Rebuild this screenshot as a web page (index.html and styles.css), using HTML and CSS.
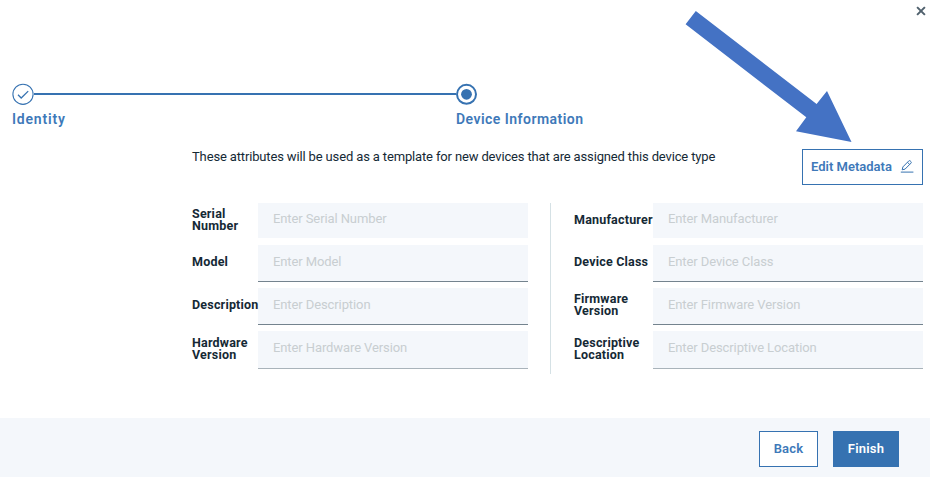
FILE: index.html
```html
<!DOCTYPE html>
<html lang="en">
<head>
<meta charset="utf-8">
<title>Device Information</title>
<link rel="stylesheet" href="styles.css">
</head>
<body>
<main class="dialog">
  <header class="top">
    <button class="close" aria-label="Close"><svg width="10" height="10" viewBox="0 0 10 10"><path d="M1.1 1.1 8.9 8.9M8.9 1.1 1.1 8.9"/></svg></button>
  </header>
  <nav class="steps">
    <div class="track">
      <svg width="22" height="22" viewBox="0 0 22 22"><circle class="ring thin" cx="11" cy="11.3" r="10.1"/><path class="tick" d="M6 11.8 9.2 15 16.2 8.1"/></svg>
      <span class="line"></span>
      <svg width="22" height="22" viewBox="0 0 22 22"><circle class="ring" cx="10.5" cy="11.3" r="9.5"/><circle class="dot" cx="10.5" cy="11.3" r="5.4"/></svg>
    </div>
    <div class="names"><span class="identity">Identity</span><span class="info">Device Information</span></div>
  </nav>
  <section class="content">
    <div class="intro">
      <p>These attributes will be used as a template for new devices that are assigned this device type</p>
      <button class="edit"><span>Edit Metadata</span><svg width="14" height="14" viewBox="0 0 14 14"><path d="M.8 13.1H13.4M2.2 10.8 2.9 7.9 8.8 1.9Q9.5 1.3 10.2 1.9L11 2.7Q11.7 3.4 11 4.1L5.1 10.1ZM7.5 3.3 9.7 5.5"/></svg></button>
    </div>
    <form class="form">
      <div class="column">
        <label class="row"><span class="label">Serial Number</span><input placeholder="Enter Serial Number"></label>
        <label class="row"><span class="label">Model</span><input placeholder="Enter Model"></label>
        <label class="row"><span class="label">Description</span><input placeholder="Enter Description"></label>
        <label class="row"><span class="label">Hardware Version</span><input placeholder="Enter Hardware Version"></label>
      </div>
      <div class="column right">
        <label class="row"><span class="label">Manufacturer</span><input placeholder="Enter Manufacturer"></label>
        <label class="row"><span class="label">Device Class</span><input placeholder="Enter Device Class"></label>
        <label class="row"><span class="label">Firmware Version</span><input placeholder="Enter Firmware Version"></label>
        <label class="row"><span class="label">Descriptive Location</span><input placeholder="Enter Descriptive Location"></label>
      </div>
    </form>
  </section>
  <footer class="footer"><button class="back">Back</button><button class="finish">Finish</button></footer>
  <svg class="arrow" width="168" height="134" viewBox="684 9 168 134"><path d="M695.8 11 816.6 104 827 91 851.5 142 796 131.3 806.3 117.3 685.6 24.2Z"/></svg>
</main>
</body>
</html>
```
FILE: styles.css
```css
* { box-sizing: border-box; }
body { margin: 0; background: #fff; color: #152935; font-family: Roboto, "Liberation Sans", sans-serif; font-size: 13px; }
button, input { font: inherit; margin: 0; border-radius: 0; }
svg { display: block; flex: none; }
.dialog { position: relative; width: 930px; height: 477px; display: flex; flex-direction: column; }
.top { height: 83px; display: flex; justify-content: flex-end; align-items: flex-start; padding: 6px 4px 0 0; }
.close { border: 0; background: none; padding: 0; }
.close path { fill: none; stroke: #50616d; stroke-width: 2; }
.steps { height: 60px; padding-left: 12px; }
.track { display: flex; align-items: center; height: 22px; }
.line { width: 422px; height: 2px; background: #3672b1; }
.ring { fill: #fff; stroke: #3672b1; stroke-width: 2; }
.thin { stroke-width: 1.1; }
.tick { fill: none; stroke: #3672b1; stroke-width: 1.3; }
.dot { fill: #3672b1; }
.names { display: flex; margin-top: 5px; color: #3e79b9; font-size: 14px; font-weight: 600; line-height: 18px; white-space: nowrap; }
.identity { width: 444px; letter-spacing: .8px; }
.info { letter-spacing: .47px; }
.content { height: 275px; padding: 5px 7px 0 192px; }
.intro { display: flex; justify-content: space-between; align-items: flex-start; height: 55px; }
.intro p { margin: 0; line-height: 18px; white-space: nowrap; letter-spacing: -.145px; }
.edit { width: 121px; height: 36px; margin-top: 1px; padding: 0 8px 2px 8px; display: flex; align-items: center; justify-content: space-between; border: 1px solid #3672b1; background: #fff; color: #3e79b9; font-weight: 600; white-space: nowrap; }
.edit path { fill: none; stroke: #3672b1; stroke-width: 1; }
.form { display: flex; }
.column { width: 359px; height: 171px; padding-right: 23px; border-right: 1px solid #d5e1e5; display: grid; grid-template-rows: 36px 37px 37px 38px; row-gap: 6px; align-content: start; }
.right { width: 372px; padding: 0 0 0 23px; border: 0; }
.row { display: grid; grid-template-columns: 66px 270px; align-items: center; }
.right .row { grid-template-columns: 79px 270px; }
.label { z-index: 1; font-size: 12.5px; font-weight: 700; line-height: 12px; letter-spacing: .2px; padding-bottom: 3px; }
input { width: 100%; height: 100%; padding: 0 15px 4px; border: 0; border-bottom: 1px solid #74838e; background: #f4f7fb; letter-spacing: -.1px; }
.row:first-child input { height: 35px; align-self: start; border: 0; }
.row:last-child input { border-color: #a9b3ba; }
input::placeholder { color: #c8ced1; opacity: 1; }
.footer { height: 59px; background: #f4f7fb; display: flex; justify-content: flex-end; gap: 15px; padding: 13px 31px 0 0; }
.footer button { height: 36px; border: 1px solid #3672b1; padding: 0 0 2px; font-weight: 600; letter-spacing: .2px; }
.footer .back { width: 59px; color: #3e79b9; background: #fff; }
.footer .finish { width: 66px; color: #fff; background: #3672b1; }
.arrow { position: absolute; left: 684px; top: 9px; pointer-events: none; }
.arrow path { fill: #4472c4; }
```
